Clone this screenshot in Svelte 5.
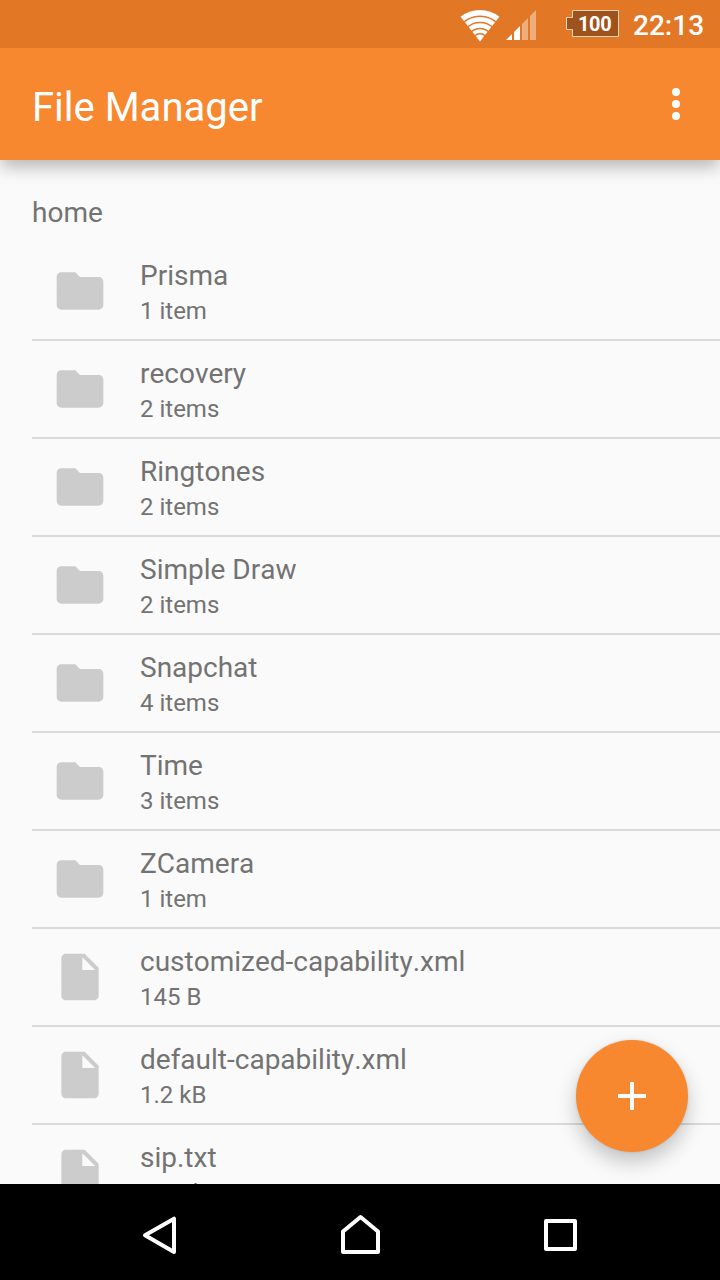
<script>
  const entries = [
    { name: 'Prisma', detail: '1 item', folder: true },
    { name: 'recovery', detail: '2 items', folder: true },
    { name: 'Ringtones', detail: '2 items', folder: true },
    { name: 'Simple Draw', detail: '2 items', folder: true },
    { name: 'Snapchat', detail: '4 items', folder: true },
    { name: 'Time', detail: '3 items', folder: true },
    { name: 'ZCamera', detail: '1 item', folder: true },
    { name: 'customized-capability.xml', detail: '145 B', folder: false },
    { name: 'default-capability.xml', detail: '1.2 kB', folder: false },
    { name: 'sip.txt', detail: '79.5 kB', folder: false }
  ];
</script>

<div class="screen">
  <header class="status">
    <svg class="wifi" width="40" height="34" viewBox="0 0 40 34">
      <path d="M20 33.500L.6 8.700A31.500 31.500 0 0 1 39.400 8.700Z" fill="#fff" />
      <g fill="none" stroke="#e27826" stroke-width="1.400">
        <circle cx="20" cy="33.500" r="25.300" />
        <circle cx="20" cy="33.500" r="19" />
        <circle cx="20" cy="33.500" r="13" />
        <circle cx="20" cy="33.500" r="7.800" />
      </g>
    </svg>
    <svg class="signal" width="30" height="30" viewBox="0 0 30 30">
      <path d="M0 30L6 24V30ZM8 22L14 16V30H8Z" fill="#fff" />
      <path d="M16 14L22 8V30H16ZM24 6L30 0V30H24Z" fill="#fff" fill-opacity=".4" />
    </svg>
    <div class="battery">
      <svg width="53" height="27" viewBox="0 0 53 27">
        <path d="M6.500 .5H52.500V26.500H6.500V19.500H.5V7.500H6.500Z" fill="#9f531c" stroke="#f0d3bb" />
      </svg>
      <span>100</span>
    </div>
    <time>22:13</time>
  </header>
  <div class="toolbar">
    <h1>File Manager</h1>
    <svg width="8" height="32" viewBox="0 0 8 32" fill="#fff">
      <circle cx="4" cy="4" r="4" /><circle cx="4" cy="16" r="4" /><circle cx="4" cy="28" r="4" />
    </svg>
  </div>
  <main>
    <div class="crumb">home</div>
    <ul>
      {#each entries as entry}
        <li>
          <svg width="56" height="56" viewBox="0 0 24 24" fill="#ccc">
            {#if entry.folder}
              <path d="M10 4H4c-1.100 0-1.990.9-1.990 2L2 18c0 1.100.9 2 2 2h16c1.100 0 2-.9 2-2V8c0-1.100-.9-2-2-2h-8l-2-2z" />
            {:else}
              <path d="M6 2c-1.100 0-1.990.9-1.990 2L4 20c0 1.100.89 2 1.990 2H18c1.100 0 2-.9 2-2V8l-6-6H6z" />
              <path d="M13 9V3.500L18.500 9z" fill="#fafafa" />
            {/if}
          </svg>
          <div class="text">
            <div class="name">{entry.name}</div>
            <div class="detail">{entry.detail}</div>
          </div>
        </li>
      {/each}
    </ul>
    <button class="fab" aria-label="Add">
      <svg width="28" height="28" viewBox="0 0 28 28"><path d="M12 0h4v12h12v4H16v12h-4V16H0v-4h12z" fill="#fff" /></svg>
    </button>
  </main>
  <nav>
    <svg width="40" height="96" viewBox="140 1184 40 96"><path d="M145 1235.300L174 1218.700V1252Z" /></svg>
    <svg width="40" height="96" viewBox="340 1184 40 96"><path d="M343 1252V1231.500L360.500 1217L378 1231.500V1252Z" /></svg>
    <svg width="40" height="96" viewBox="540 1184 40 96"><path d="M546 1221H575V1249H546Z" /></svg>
  </nav>
</div>

<style>
  :global(body) { margin: 0; }
  .screen {
    display: flex;
    flex-direction: column;
    width: 720px;
    height: 1280px;
    overflow: hidden;
    background: #fafafa;
    color: #737373;
    font-family: Roboto, sans-serif;
  }
  .status {
    display: flex;
    align-items: flex-start;
    box-sizing: border-box;
    height: 48px;
    flex: none;
    padding-left: 460px;
    background: #e27826;
    color: #fff;
    position: relative;
    z-index: 2;
  }
  .wifi { margin-top: 8px; }
  .signal { margin: 10px 0 0 6px; }
  .battery {
    display: grid;
    margin: 10px 0 0 30px;
    font-size: 20px;
    font-weight: 700;
    line-height: 27px;
  }
  .battery > * { grid-area: 1 / 1; }
  .battery span { padding-left: 12px; letter-spacing: -.4px; line-height: 28px; height: 27px; }
  time {
    margin: 9px 0 0 14px;
    font-size: 28px;
    font-weight: 500;
    line-height: 33px;
  }
  .toolbar {
    display: flex;
    align-items: center;
    justify-content: space-between;
    box-sizing: border-box;
    flex: none;
    height: 112px;
    padding: 0 40px 0 32px;
    background: #f78830;
    color: #fff;
    z-index: 1;
    box-shadow: 0 8px 16px -1px rgba(0, 0, 0, .27);
  }
  h1 {
    margin: 8px 0 0;
    font-size: 40px;
    font-weight: 400;
    line-height: 48px;
  }
  main {
    position: relative;
    flex: 1;
    min-height: 0;
    overflow: hidden;
  }
  .crumb {
    padding: 35px 32px 12px;
    font-size: 28px;
    line-height: 36px;
  }
  ul {
    margin: 0 0 0 32px;
    padding: 0;
    list-style: none;
  }
  li {
    display: flex;
    align-items: center;
    gap: 32px;
    height: 96px;
    padding-left: 20px;
    border-bottom: 2px solid #dadada;
  }
  .text { padding-top: 3px; }
  .name { font-size: 28px; line-height: 36px; font-kerning: none; }
  .detail { font-size: 24px; line-height: 34px; }
  .fab {
    position: absolute;
    right: 32px;
    bottom: 32px;
    display: grid;
    place-items: center;
    width: 112px;
    height: 112px;
    padding: 0;
    border: 0;
    border-radius: 50%;
    background: #f78830;
    box-shadow: 0 10px 20px rgba(0, 0, 0, .22), 0 0 3px rgba(0, 0, 0, .12);
  }
  nav {
    display: flex;
    justify-content: center;
    gap: 160px;
    flex: none;
    height: 96px;
    background: #000;
  }
  nav path {
    fill: none;
    stroke: #fff;
    stroke-width: 4;
    stroke-linejoin: round;
  }
  nav svg { flex: none; }
</style>
